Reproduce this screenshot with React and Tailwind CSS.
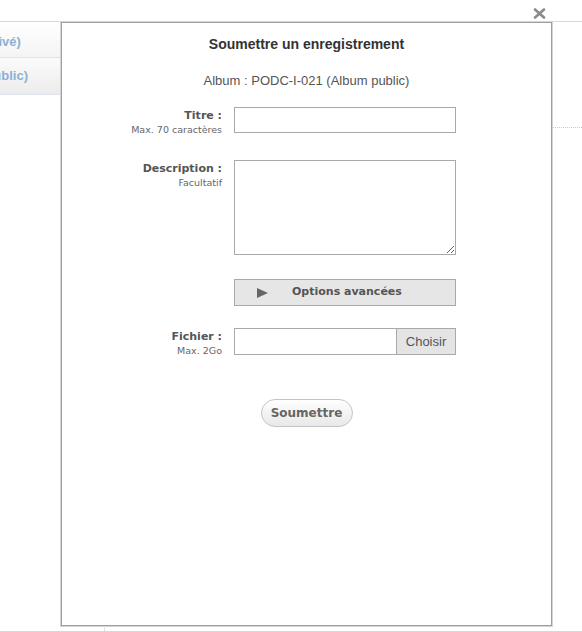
import React from 'react';

const labelFont = { fontFamily: '"DejaVu Sans", "Liberation Sans", sans-serif' };

const FieldLabel = ({ title, hint }) => {
  return (
    <div className="text-right pt-[2px] leading-[13px]" style={labelFont}>
      <div className="text-[11px] font-bold text-[#555]">{title}</div>
      {hint && <div className="text-[9.5px] text-[#666] mt-[1px]">{hint}</div>}
    </div>
  );
};

const App = () => {
  return (
    <div className="relative w-[582px] h-[632px] bg-white overflow-hidden font-['Liberation_Sans',Arial,sans-serif]">
      {/* page underneath */}
      <div className="flex flex-col h-full">
        <div className="h-[21px]" />
        <div className="flex-1 flex border-t border-[#d8d8d8]">
          <div className="w-[200px] flex flex-col overflow-hidden">
            <div className="h-[36px] flex items-center pt-[4px] border-b border-[#dde3ea] bg-gradient-to-b from-white to-[#f4f4f4]">
              <span className="ml-[-63px] whitespace-nowrap text-[13px] font-bold text-[#8db0d4]">(Album privé)</span>
            </div>
            <div className="h-[37px] flex items-center border-b border-[#dde3ea] bg-gradient-to-b from-[#fbfbfb] to-[#ececec]">
              <span className="ml-[-63px] whitespace-nowrap text-[13px] font-bold text-[#8db0d4]">(Album public)</span>
            </div>
          </div>
          <div className="flex-1 flex flex-col">
            <div className="h-[105px]" />
            <div className="border-t border-dotted border-[#c8c8c8]" />
          </div>
        </div>
        <div className="h-[6px] flex">
          <div className="w-[104px]" />
          <div className="border-l border-dotted border-[#c8c8c8]" />
        </div>
        <div className="h-[1px] bg-[#d8d8d8]" />
      </div>

      {/* close button */}
      <button className="absolute left-[528px] top-[4px] w-[23px] h-[18px] bg-white flex items-center justify-center">
        <svg width="13" height="11" viewBox="0 0 13 11">
          <path d="M2 1.5 L11 9.5 M11 1.5 L2 9.5" stroke="#8a8a8a" strokeWidth="2.6" strokeLinecap="round" />
        </svg>
      </button>

      {/* modal */}
      <div className="absolute left-[61px] top-[22px] w-[491px] h-[604px] bg-white border border-[#a0a0a0] shadow-[0_0_0_1px_#d4d4d4]">
        <div className="flex flex-col items-center pt-[13px]">
          <h2 className="text-[14px] leading-[17px] font-bold text-[#333]">Soumettre un enregistrement</h2>
          <p className="mt-[20px] text-[13px] leading-[16px] text-[#555]">Album : PODC-I-021 (Album public)</p>
        </div>

        <div className="grid grid-cols-[160px_222px] gap-x-3 mt-[18px]">
          <FieldLabel title="Titre :" hint="Max. 70 caractères" />
          <input type="text" className="h-[26px] border border-[#a9a9a9] bg-white outline-none" />

          <div className="h-[24px] col-span-2" />

          <FieldLabel title="Description :" hint="Facultatif" />
          <textarea className="h-[95px] border border-[#a9a9a9] bg-white outline-none resize" />

          <div className="h-[24px] col-span-2" />

          <div />
          <button className="h-[27px] flex items-center border border-[#a9a9a9] bg-[#e6e6e6]" style={labelFont}>
            <svg width="11" height="10" viewBox="0 0 11 10" className="ml-[22px]">
              <path d="M0 0 L11 5 L0 10 Z" fill="#666" />
            </svg>
            <span className="ml-[24px] text-[11px] font-bold text-[#555]">Options avancées</span>
          </button>

          <div className="h-[22px] col-span-2" />

          <FieldLabel title="Fichier :" hint="Max. 2Go" />
          <div className="flex h-[27px]">
            <input type="text" className="flex-1 min-w-0 border border-[#a9a9a9] bg-white outline-none" />
            <button className="w-[59px] border border-l-0 border-[#a9a9a9] bg-[#e4e4e4] text-[13px] text-[#555]">Choisir</button>
          </div>
        </div>

        <div className="flex justify-center mt-[42px]">
          <button className="w-[92px] h-[28px] rounded-full border border-[#c4c4c4] bg-gradient-to-b from-white to-[#e8e8e8] text-[12px] font-bold text-[#666]" style={labelFont}>
            Soumettre
          </button>
        </div>
      </div>
    </div>
  );
};

export default App;
